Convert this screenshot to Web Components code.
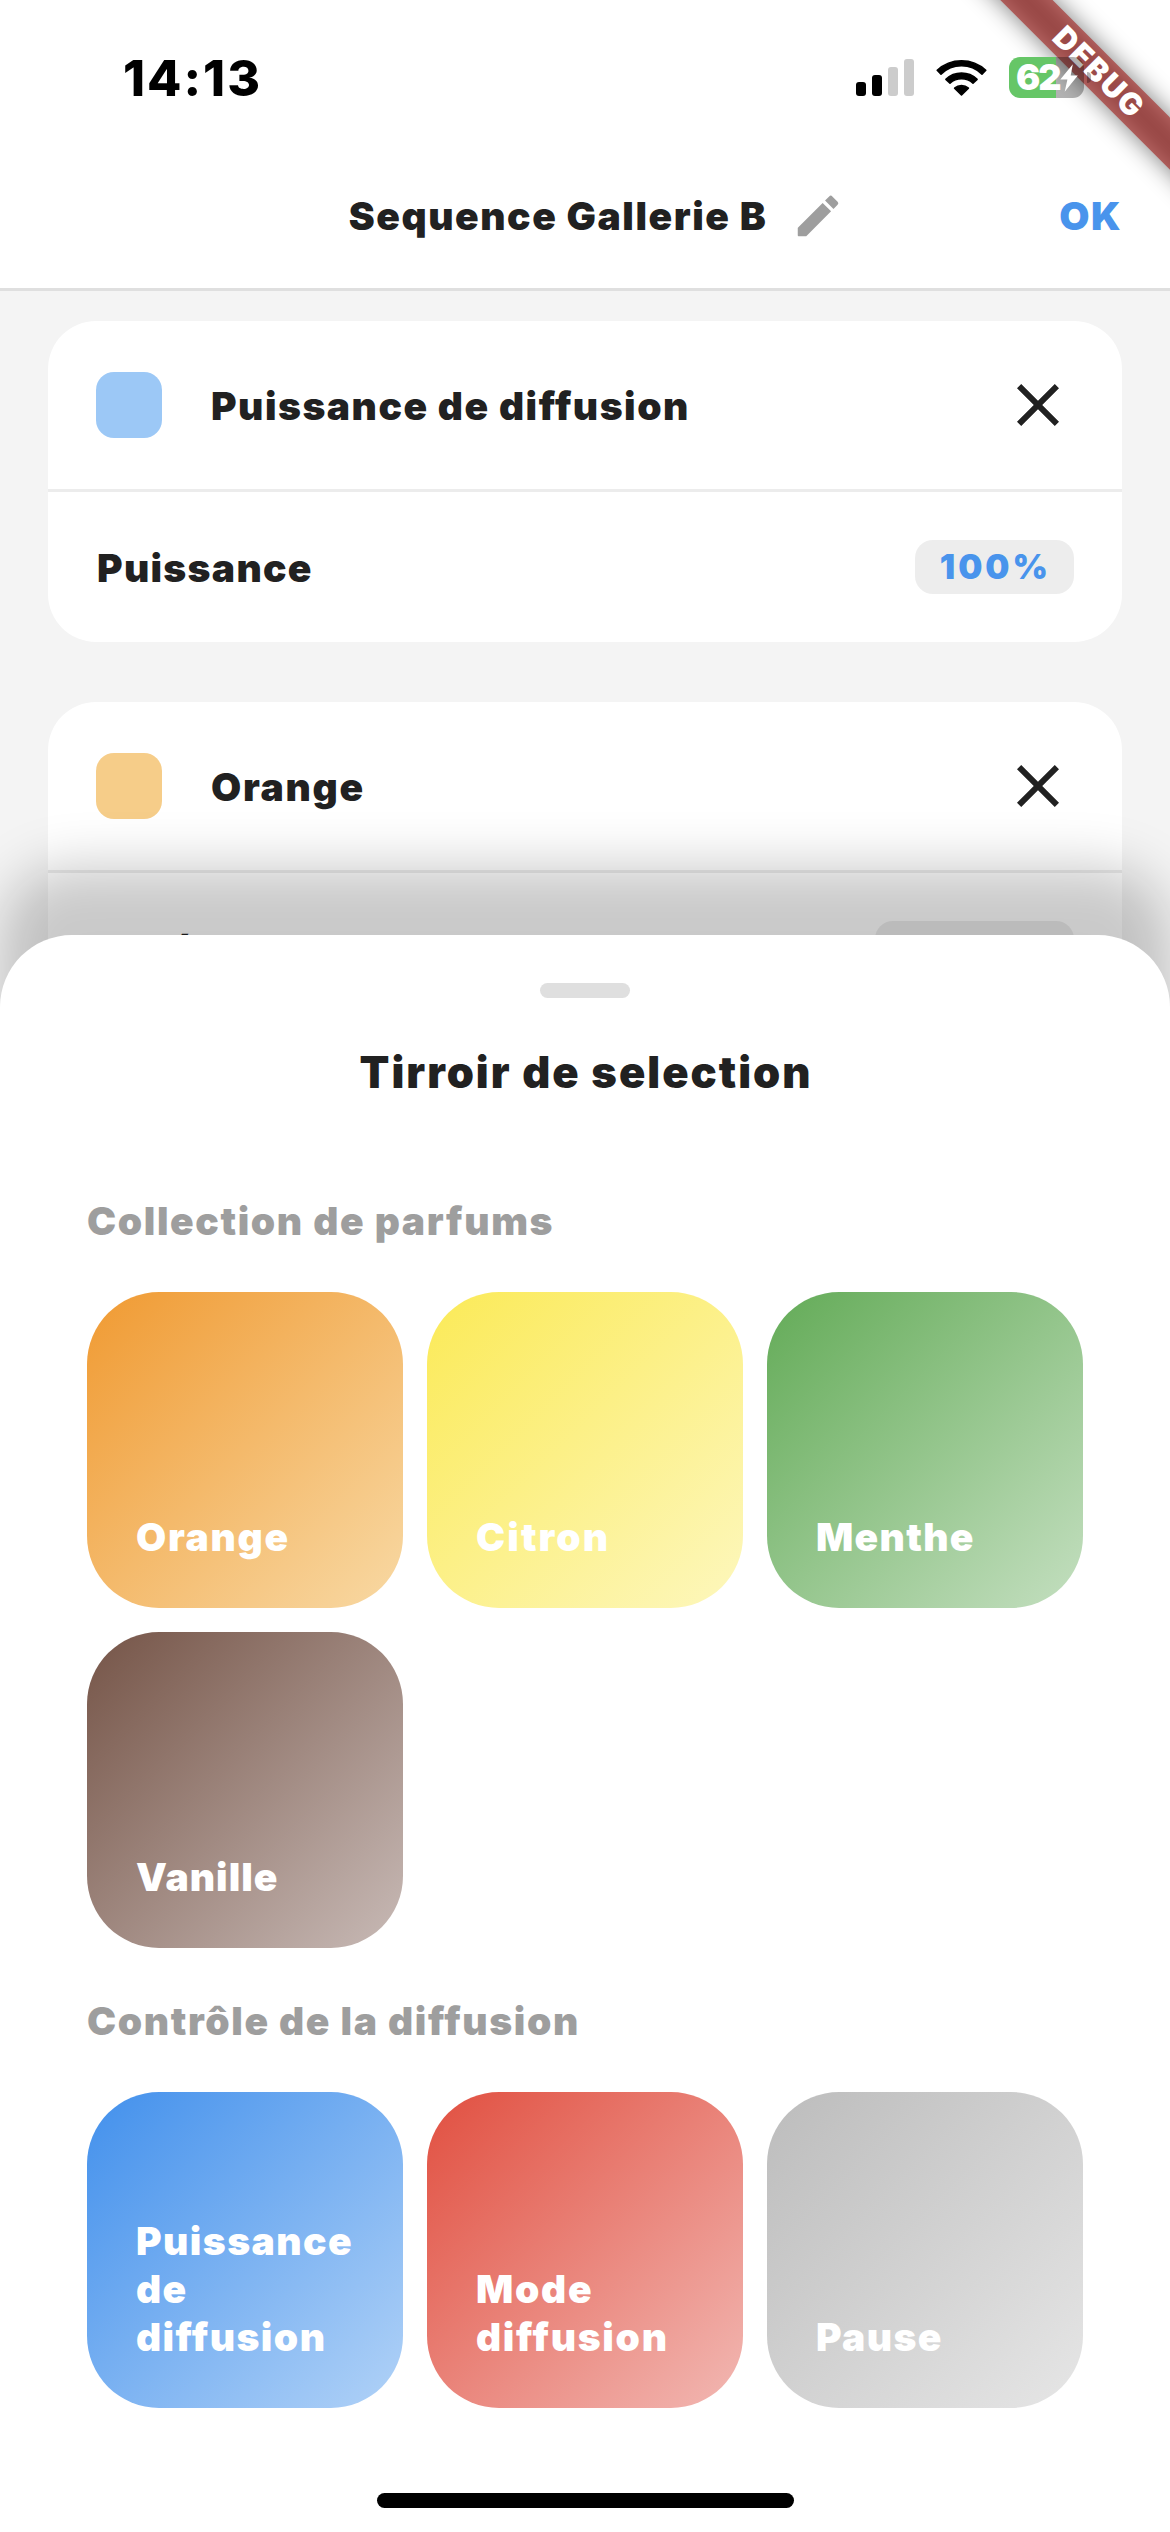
<!DOCTYPE html>
<html lang="fr">
<head>
<meta charset="utf-8">
<title>Sequence Gallerie B</title>
<style>
  html, body { margin: 0; padding: 0; }
  body {
    background: #f4f4f4;
    color: #212121;
    font-family: Inter, "Liberation Sans", sans-serif;
    font-weight: 900;
    font-size: 39px;
    letter-spacing: 1.52px;
  }
</style>
</head>
<body>
<app-screen>
  <status-bar slot="status" time="14:13" battery="62"></status-bar>
  <nav-bar slot="nav" action="OK">Sequence Gallerie B</nav-bar>
  <sequence-card style="--swatch:#9cc8f6" heading="Puissance de diffusion" label="Puissance">100%</sequence-card>
  <sequence-card style="--swatch:#f6cd89;--head-spacing:1.7px;--pill-spacing:2px" heading="Orange" label="Durée">5 m 10 s</sequence-card>
  <selection-drawer slot="drawer" heading="Tirroir de selection">
    <tile-group heading="Collection de parfums">
      <flavor-tile style="--from:#f09a32;--to:#f8d9a4;--spacing:1.7px">Orange</flavor-tile>
      <flavor-tile style="--from:#fbea57;--to:#fdf7bd;--spacing:2.1px">Citron</flavor-tile>
      <flavor-tile style="--from:#63ab57;--to:#c4dfc0;--spacing:1.3px">Menthe</flavor-tile>
      <flavor-tile style="--from:#755447;--to:#c8bab6;--spacing:1.02px">Vanille</flavor-tile>
    </tile-group>
    <tile-group heading="Contrôle de la diffusion">
      <flavor-tile style="--from:#4290ec;--to:#b1d2f7;--spacing:1.45px">Puissance de diffusion</flavor-tile>
      <flavor-tile style="--from:#e14f40;--to:#f2b8b3;--spacing:1.7px">Mode diffusion</flavor-tile>
      <flavor-tile style="--from:#bcbcbc;--to:#e6e6e6;--spacing:1.4px">Pause</flavor-tile>
    </tile-group>
  </selection-drawer>
  <home-indicator slot="home"></home-indicator>
  <debug-banner slot="banner">DEBUG</debug-banner>
</app-screen>

<script>
const define = (name, html) => customElements.define(name, class extends HTMLElement {
  connectedCallback() {
    if (this.shadowRoot) return;
    const root = this.attachShadow({ mode: 'open' });
    root.innerHTML = html.replace(/\{\{(\w+)\}\}/g, (_, key) => this.getAttribute(key) || '');
  }
});

define('app-screen', `
<style>
  :host { display: flex; flex-direction: column; position: relative; width: 1170px; height: 2532px; overflow: hidden; background: #f4f4f4; }
  .top { background: #fff; border-bottom: 3px solid #dfdfdf; height: 288px; flex: none; }
  .list { display: flex; flex-direction: column; gap: 60px; padding: 30px 48px 0; }
  .overlay { position: absolute; inset: 935.3px 0 0 0; display: flex; flex-direction: column; }
</style>
<div class="top"><slot name="status"></slot><slot name="nav"></slot></div>
<div class="list"><slot></slot></div>
<div class="overlay"><slot name="drawer"></slot></div>
<slot name="home"></slot>
<slot name="banner"></slot>
`);

define('status-bar', `
<style>
  :host { display: flex; justify-content: space-between; align-items: flex-start; height: 141px; box-sizing: border-box; padding: 48px 79px 0 123px; color: #000; position: relative; z-index: 3; }
  .time { font-size: 50px; font-weight: 800; line-height: 60px; letter-spacing: 2px; }
  .icons { display: flex; align-items: flex-start; padding-top: 9px; }
  .cell { margin: 2px 22px 0 0; }
  .wifi { margin: 2px 22px 0 0; }
  .battery { display: flex; align-items: center; gap: 3px; }
  .body { display: flex; align-items: center; width: 75px; height: 41px; border-radius: 11px; background: linear-gradient(90deg, #66c667 47px, rgba(0,0,0,.3) 47px); color: #fff; font-size: 36px; line-height: 41px; letter-spacing: -2px; padding-left: 7px; box-sizing: border-box; }
  .body svg { flex: none; }
  .nub { width: 4px; height: 11px; border-radius: 0 4px 4px 0; background: rgba(0,0,0,.3); }
</style>
<span class="time">{{time}}</span>
<div class="icons">
  <svg class="cell" width="58" height="37" viewBox="0 0 58 37"><rect y="23" width="10" height="14" rx="3"/><rect x="16" y="16" width="10" height="21" rx="3"/><rect x="32" y="8" width="10" height="29" rx="3" fill="#ccc"/><rect x="48" width="10" height="37" rx="3" fill="#ccc"/></svg>
  <svg class="wifi" width="51" height="38" viewBox="0 0 51 38"><g fill="#000" stroke="#000" stroke-width="1.6" stroke-linejoin="round"><path d="M1.2 11.3A35.6 35.6 0 0 1 49.8 11.3L46 15.1A29.2 29.2 0 0 0 5 15.1Z"/><path d="M9.9 20.3A22.6 22.6 0 0 1 41.1 20.3L37 24.2A17.3 17.3 0 0 0 14 24.2Z"/><path d="M18.6 29.2A10.6 10.6 0 0 1 32.4 29.2L25.5 36Z"/></g></svg>
  <div class="battery">
    <div class="body">{{battery}}<svg width="18" height="28" viewBox="0 0 18 28"><path d="M12.8 0.3L0.3 15.6H7.4L4.7 27.7L17.8 11.6H10.7Z" fill="#fff"/></svg></div>
    <div class="nub"></div>
  </div>
</div>
`);

define('nav-bar', `
<style>
  :host { display: flex; align-items: center; height: 150px; padding: 0 47px 0 348.8px; }
  .title { line-height: 48px; white-space: nowrap; letter-spacing: 1.53px; }
  svg { margin-left: 24px; }
  .action { margin-left: auto; color: #4994ec; letter-spacing: 1.5px; line-height: 48px; margin-right: 1px; }
</style>
<span class="title"><slot></slot></span>
<svg width="54" height="54" viewBox="0 0 24 24" fill="#9e9e9e"><path d="M3 17.46v3.04c0 .28.22.5.5.5h3.04c.13 0 .26-.05.35-.15L17.81 9.94l-3.75-3.75L3.15 17.1c-.1.1-.15.22-.15.36zM20.71 7.04a.996.996 0 0 0 0-1.41l-2.34-2.34a.996.996 0 0 0-1.41 0l-1.83 1.83 3.75 3.75 1.83-1.83z"/></svg>
<span class="action">{{action}}</span>
`);

define('sequence-card', `
<style>
  :host { display: block; height: 321px; flex: none; border-radius: 48px; background: #fff; overflow: hidden; line-height: 48px; }
  .row { display: flex; align-items: center; padding: 0 48px; box-sizing: border-box; }
  .head { height: 168px; }
  .swatch { width: 66px; height: 66px; border-radius: 18px; background: var(--swatch); margin-right: 49px; }
  .heading { letter-spacing: var(--head-spacing, 1.5px); padding-top: 1px; }
  .head svg { margin: 0 0 0 auto; }
  .body { height: 153px; border-top: 3px solid #ececec; justify-content: space-between; }
  .label { padding-top: 1px; margin-left: 1px; letter-spacing: 1.3px; }
  .pill { background: #ededed; color: #4994ec; border-radius: 18px; height: 54px; line-height: 54px; padding: 0 23px 0 25px; font-size: 34px; letter-spacing: var(--pill-spacing, 3px); white-space: pre; }
</style>
<div class="row head">
  <div class="swatch"></div><span class="heading">{{heading}}</span>
  <svg width="72" height="72" viewBox="0 0 24 24" fill="#212121"><path d="M19 6.41L17.59 5 12 10.59 6.41 5 5 6.41 10.59 12 5 17.59 6.41 19 12 13.41 17.59 19 19 17.59 13.41 12z"/></svg>
</div>
<div class="row body"><span class="label">{{label}}</span><span class="pill"><slot></slot></span></div>
`);

define('selection-drawer', `
<style>
  :host { display: flex; flex-direction: column; flex: 1; background: #fff; border-radius: 72px 72px 0 0; box-shadow: 0 -69px 54px rgba(0,0,0,.21); padding: 48px 87px 0; box-sizing: border-box; }
  .handle { align-self: center; width: 90px; height: 15px; flex: none; border-radius: 8px; background: #dfdfdf; }
  h1 { margin: 46px 0 97px; font-size: 43.5px; font-weight: 900; line-height: 56px; letter-spacing: 2px; text-align: center; text-indent: 2px; }
</style>
<div class="handle"></div>
<h1>{{heading}}</h1>
<slot></slot>
`);

define('tile-group', `
<style>
  :host { display: block; padding-bottom: 49px; }
  h2 { margin: 0 0 47px; font-size: 39px; font-weight: 900; line-height: 48px; letter-spacing: 1.62px; color: #9e9e9e; }
  .grid { display: grid; grid-template-columns: repeat(3, 316px); grid-auto-rows: 316px; gap: 24px; }
</style>
<h2>{{heading}}</h2>
<div class="grid"><slot></slot></div>
`);

define('flavor-tile', `
<style>
  :host { display: flex; align-items: flex-end; box-sizing: border-box; padding: 0 44px 47px 49px; border-radius: 72px; background: linear-gradient(135deg, var(--from), var(--to)); color: #fff; line-height: 48px; letter-spacing: var(--spacing); }
</style>
<span><slot></slot></span>
`);

define('home-indicator', `
<style>
  :host { position: absolute; left: 377px; bottom: 24px; width: 417px; height: 15px; border-radius: 8px; background: #000; }
</style>
`);

define('debug-banner', `
<style>
  :host { position: absolute; z-index: 2; left: 898.5px; top: 53.5px; width: 400px; height: 36.5px; transform: rotate(45deg); color: #fff; font-size: 30.6px; font-weight: 900; line-height: 36px; letter-spacing: 1.66px; text-align: center; }
  .shade { position: absolute; inset: 0; z-index: -2; background: rgba(0,0,0,.5); filter: blur(12px); }
  .core { position: absolute; inset: 0; z-index: -1; background: rgba(162,34,31,.627); }
</style>
<div class="shade"></div><div class="core"></div><span><slot></slot></span>
`);
</script>
</body>
</html>
